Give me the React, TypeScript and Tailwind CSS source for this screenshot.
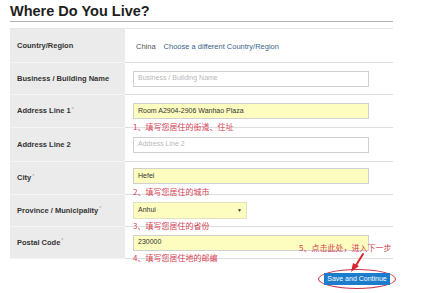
import type { ReactNode } from "react";

const cjk = "font-['Noto_Sans_CJK_SC',sans-serif]";

type RowProps = {
  label: string;
  required?: boolean;
  height: string;
  note?: string;
  noteBottom?: string;
  children: ReactNode;
};

function Row({ label, required, height, note, noteBottom, children }: RowProps) {
  return (
    <div className={`grid grid-cols-[115px_1fr] ${height}`}>
      <div className="flex items-center border-b border-[#f4f4f4] bg-[#ebebeb] pl-[7px] text-[7.5px] font-bold text-[#333]">
        {label}
        {required && <sup className="ml-[1px] text-[5px] font-normal text-[#999]">*</sup>}
      </div>
      <div className="relative flex items-center border-b border-[#dedede] pl-[8px]">
        {children}
        {note && (
          <div
            className={`absolute left-[8px] ${noteBottom ?? "bottom-[-5px]"} text-[8px] leading-[10px] text-[#d43f55] ${cjk}`}
          >
            {note}
          </div>
        )}
      </div>
    </div>
  );
}

function Field({ value, placeholder, filled }: { value?: string; placeholder?: string; filled?: boolean }) {
  return (
    <div
      className={`flex h-[16px] w-[236px] items-center border border-[#d0d0d0] pl-[4px] text-[7px] ${
        filled ? "bg-[#fdfdbf] text-[#333]" : "bg-white text-[#b8b8b8]"
      }`}
    >
      {value ?? placeholder}
    </div>
  );
}

export default function App() {
  return (
    <div className="relative h-[293px] w-[423px] overflow-hidden bg-white font-['Liberation_Sans',Arial,sans-serif]">
      <div className="pl-[10px] pr-[30px]">
        <h1 className="pt-[1px] text-[14.5px] font-bold leading-[20px] text-[#1e1e1e]">Where Do You Live?</h1>
        <div className="border-t border-[#b0b0b0]" />

        <div className="mt-[6px] border-t border-[#e6e6e6]">
          <Row label="Country/Region" height="h-[34px]">
            <div className="flex pt-[2px] text-[7.5px]">
              <span className="ml-[3px] text-[#555]">China</span>
              <span className="ml-[8px] text-[#3a5f8a]">Choose a different Country/Region</span>
            </div>
          </Row>
          <Row label="Business / Building Name" height="h-[32px]">
            <Field placeholder="Business / Building Name" />
          </Row>
          <Row label="Address Line 1" required height="h-[33px]" note="1、填写您居住的街道、住址">
            <Field value="Room A2904-2906 Wanhao Plaza" filled />
          </Row>
          <Row label="Address Line 2" height="h-[34px]">
            <Field placeholder="Address Line 2" />
          </Row>
          <Row label="City" required height="h-[33px]" note="2、填写您居住的城市" noteBottom="bottom-[-3px]">
            <div className="-mt-[4px]">
              <Field value="Hefei" filled />
            </div>
          </Row>
          <Row label="Province / Municipality" required height="h-[32px]" note="3、填写您居住的省份">
            <div className="flex h-[17px] w-[114px] items-center justify-between border border-[#e2e2c0] bg-[#fdfdbf] pl-[4px] pr-[4px] text-[7px] text-[#333]">
              <span>Anhui</span>
              <span className="text-[5px]">▼</span>
            </div>
          </Row>
          <Row label="Postal Code" required height="h-[32px]" note="4、填写您居住地的邮编">
            <Field value="230000" filled />
          </Row>
        </div>

        <div className="mt-[14px] flex justify-end pr-[3px]">
          <div className="relative">
            <div className="absolute -inset-x-[6px] -inset-y-[4px] rounded-[50%] border-[1.5px] border-[#c8324a]" />
            <button className="relative flex h-[12px] w-[66px] items-center justify-center bg-[#1c7dcc] text-[7px] text-white">
              Save and Continue
            </button>
          </div>
        </div>
      </div>

      <div className={`absolute left-[299px] top-[243px] text-[8px] leading-[10px] text-[#d43f55] ${cjk}`}>
        5、点击此处，进入下一步
      </div>
      <svg className="absolute left-[345px] top-[252px]" width="24" height="22" viewBox="0 0 24 22">
        <line x1="18" y1="2" x2="10" y2="15" stroke="#d8262e" strokeWidth="2" strokeLinecap="round" />
        <polygon points="6,20 8,11 14,14" fill="#d8262e" />
      </svg>
    </div>
  );
}
